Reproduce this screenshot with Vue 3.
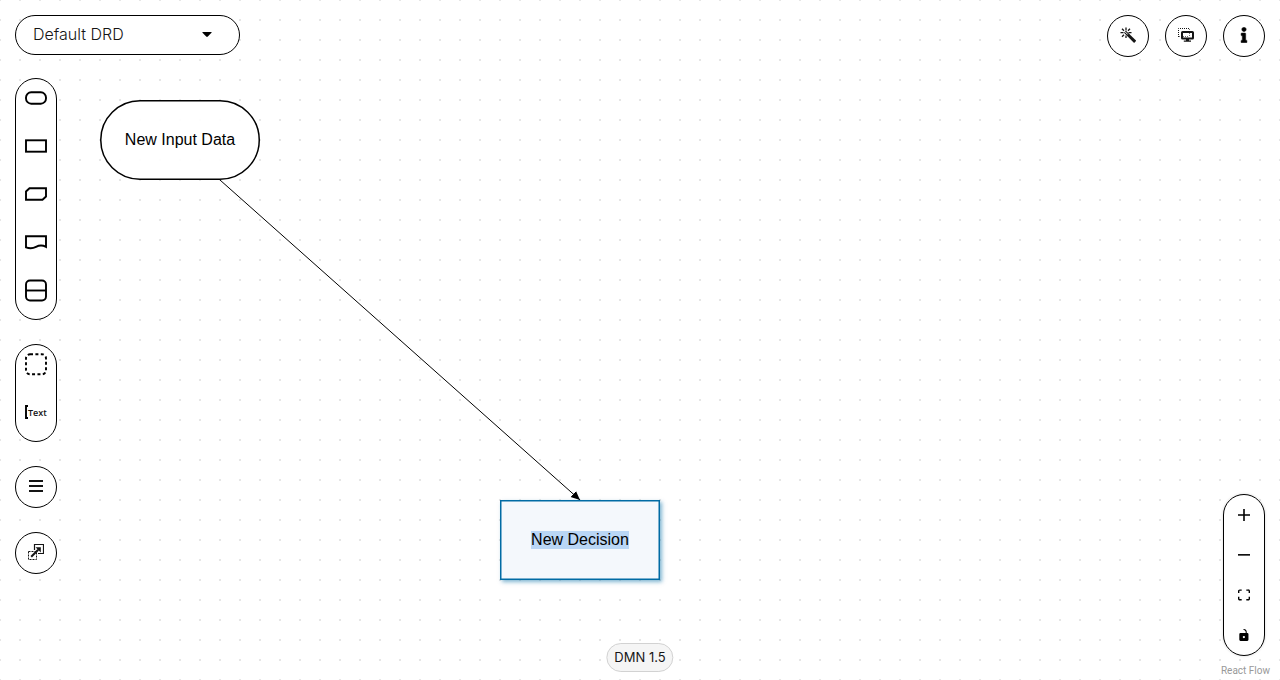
<script setup>
import { onMounted, ref } from 'vue'

const decisionName = ref('New Decision')
const nameInput = ref(null)

const nodeTools = [
  { label: 'Input Data', shape: 'input' },
  { label: 'Decision', shape: 'decision' },
  { label: 'Business Knowledge Model', shape: 'bkm' },
  { label: 'Knowledge Source', shape: 'source' },
  { label: 'Decision Service', shape: 'service' }
]

onMounted(() => {
  nameInput.value.focus()
  nameInput.value.select()
})
</script>

<template>
  <main class="editor">
    <svg class="canvas" aria-hidden="true">
      <defs>
        <pattern id="dots" x="-10" y="-10" width="20" height="20" patternUnits="userSpaceOnUse">
          <circle cx="10" cy="10" r="1" fill="#dedede" />
        </pattern>
        <marker id="arrow" viewBox="0 0 10 10" refX="10" refY="5" markerWidth="9" markerHeight="9" markerUnits="userSpaceOnUse" orient="auto">
          <path d="M0 .5L10 5L0 9.500z" />
        </marker>
      </defs>
      <rect width="100%" height="100%" fill="url(#dots)" />
      <path d="M220 180L580 500" stroke="#000" fill="none" marker-end="url(#arrow)" />
    </svg>

    <div class="node input-node">
      <svg class="node-shape" viewBox="0 0 160 80" aria-hidden="true"><rect x=".75" y=".75" width="158.500" height="78.500" rx="39.250" fill="#fff" fill-opacity=".9" stroke="#000" stroke-width="1.500" /></svg>
      <span class="node-name">New Input Data</span>
    </div>
    <div class="node decision-node">
      <svg class="node-shape" viewBox="0 0 160 80" aria-hidden="true"><rect x=".75" y=".75" width="158.500" height="78.500" fill="#f4f8fc" stroke="#006ba4" stroke-width="1.500" /></svg>
      <input ref="nameInput" v-model="decisionName" class="node-name" aria-label="Decision name" spellcheck="false" />
    </div>

    <header class="topbar">
      <button class="drd" type="button">
        <span>Default DRD</span>
        <svg width="10" height="5" viewBox="0 0 10 5"><path d="M1 0h8q1 0 .5 .8L5.8 4.600q-.8 .7-1.600 0L.5 .8Q0 0 1 0z" /></svg>
      </button>
      <div class="actions">
        <button class="round" type="button" aria-label="Autolayout">
          <svg width="16" height="16" viewBox="0 0 16 16" fill="none" stroke="#151515">
            <path d="M6 .5v3M6 8.500v2.500M.5 5.700h3M8.500 5.700h3M2 1.800l2 2M10 1.800l-2 2M2 9.700l2-2" stroke-width="1.300" />
            <path d="M5 4.700l3.500 3.500" stroke-width="2.800" />
            <path d="M5.300 5l2.500 2.500" stroke="#fff" stroke-width="1" />
            <path d="M8 7.700l7.200 7.200" stroke-width="3" />
          </svg>
        </button>
        <button class="round" type="button" aria-label="Overlays">
          <svg width="16" height="16" viewBox="0 0 16 16" fill="none" stroke="#151515">
            <path d="M.5 10V1.500h11" stroke-dasharray="1 1" />
            <rect x="4" y="5" width="11" height="6.500" rx=".6" stroke-width="2" />
            <path d="M1 9.500h10M11.500 2v7" stroke-width=".6" stroke-dasharray="1 1" />
            <path d="M8 12h3v1.500h2v1.200H5.800v-1.200H8z" fill="#151515" stroke="none" />
          </svg>
        </button>
        <button class="round" type="button" aria-label="Properties">
          <svg width="8" height="16" viewBox="-32 -6 256 524" stroke="#151515" stroke-width="16"><path d="M20 424.229h20V279.771H20c-11.046 0-20-8.954-20-20V212c0-11.046 8.954-20 20-20h112c11.046 0 20 8.954 20 20v212.229h20c11.046 0 20 8.954 20 20V492c0 11.046-8.954 20-20 20H20c-11.046 0-20-8.954-20-20v-47.771c0-11.046 8.954-20 20-20zM96 0C56.235 0 24 32.235 24 72s32.235 72 72 72 72-32.235 72-72S135.764 0 96 0z" /></svg>
        </button>
      </div>
    </header>

    <div class="workspace">
      <aside class="tools">
        <div class="group palette">
          <button v-for="tool in nodeTools" :key="tool.shape" class="tool" type="button" :aria-label="tool.label">
            <svg width="24" height="24" viewBox="0 0 24 24" fill="none" stroke="#000" stroke-width="1.900">
              <rect v-if="tool.shape === 'input'" x="2" y="6.300" width="20" height="11.400" rx="5.200" />
              <rect v-else-if="tool.shape === 'decision'" x="2" y="6.300" width="20" height="11.400" />
              <path v-else-if="tool.shape === 'bkm'" d="M5.500 6.300H22v8.200L18.500 17.700H2v-8.200z" />
              <path v-else-if="tool.shape === 'source'" d="M2 6.300h20v10.500c-3-1.600-7-1.600-10 0s-7 1.600-10 .5z" />
              <template v-else>
                <rect x="2" y="2.500" width="20" height="20" rx="4" />
                <path d="M2 12.500h20" />
              </template>
            </svg>
          </button>
        </div>
        <div class="group palette">
          <button class="tool" type="button" aria-label="Group">
            <svg width="24" height="24" viewBox="0 0 24 24" fill="none" stroke="#000" stroke-width="1.900"><rect x="2" y="2.300" width="20" height="20" rx="4" stroke-dasharray="3 2.400" /></svg>
          </button>
          <button class="tool" type="button" aria-label="Text annotation">
            <svg width="24" height="24" viewBox="0 0 24 24">
              <path d="M4 6H2v12h2" fill="none" stroke="#000" stroke-width="1.900" />
              <text x="4" y="15.500" class="tool-text">Text</text>
            </svg>
          </button>
        </div>
        <button class="round" type="button" aria-label="DRG nodes">
          <svg width="14" height="12" viewBox="0 0 14 12" fill="none" stroke="#151515" stroke-width="2"><path d="M0 1h14M0 6h14M0 11h14" /></svg>
        </button>
        <button class="round" type="button" aria-label="External nodes">
          <svg width="16" height="16" viewBox="0 0 16 16" fill="none" stroke="#151515">
            <path d="M6.500 6V.5h9v9H10" stroke-width="1.200" />
            <rect x=".5" y="7.500" width="8" height="8" stroke-dasharray="2 1" />
            <path d="M3.200 12.800l7-7" stroke-width="2" />
            <path d="M7.500 3.200h5.300v5.300z" fill="#151515" stroke="none" />
          </svg>
        </button>
      </aside>

      <div class="group controls">
        <button type="button" aria-label="Zoom in"><svg width="12" height="12" viewBox="0 0 32 32"><path d="M32 18.133H18.133V32h-4.266V18.133H0v-4.266h13.867V0h4.266v13.867H32z" /></svg></button>
        <button type="button" aria-label="Zoom out"><svg width="12" height="2" viewBox="0 0 32 5"><path d="M0 0h32v4.200H0z" /></svg></button>
        <button type="button" aria-label="Fit view"><svg width="12" height="12" viewBox="0 0 32 30"><path d="M3.692 4.630c0-.53.4-.938.939-.938h5.215V0H4.708C2.130 0 0 2.054 0 4.630v5.216h3.692V4.631zM27.354 0h-5.200v3.692h5.170c.53 0 .984.4.984.939v5.215H32V4.631A4.624 4.624 0 0027.354 0zm.954 24.830c0 .532-.4.940-.939.940h-5.215v3.768h5.215c2.577 0 4.631-2.130 4.631-4.707v-5.139h-3.692v5.139zm-23.677.940c-.531 0-.939-.4-.939-.94v-5.138H0v5.139c0 2.577 2.130 4.707 4.708 4.707h5.138V25.770H4.631z" /></svg></button>
        <button type="button" aria-label="Toggle interactivity"><svg width="12" height="12" viewBox="0 0 25 32"><path d="M21.333 10.667H19.810V7.619C19.810 3.429 16.380 0 12.190 0c-4.114 1.828-1.370 2.133.305 2.438 1.676.305 4.420 2.590 4.420 5.181v3.048H3.047A3.056 3.056 0 000 13.714v15.238A3.056 3.056 0 003.048 32h18.285a3.056 3.056 0 003.048-3.048V13.714a3.056 3.056 0 00-3.048-3.047zM12.190 24.533a3.056 3.056 0 01-3.047-3.047 3.056 3.056 0 013.047-3.048 3.056 3.056 0 013.048 3.048 3.056 3.056 0 01-3.048 3.047z" /></svg></button>
      </div>
    </div>

    <div class="version">DMN 1.5</div>
    <a class="attribution" href="#">React Flow</a>
  </main>
</template>

<style>
body {
  margin: 0;
}
</style>

<style scoped>
.editor {
  position: relative;
  box-sizing: border-box;
  min-height: 100vh;
  padding: 15px 15px 24px;
  display: flex;
  flex-direction: column;
  gap: 21px;
  background: #fff;
  color: #151515;
  font-family: Inter, "Open Sans", sans-serif;
  overflow: hidden;
}

.canvas {
  position: absolute;
  inset: 0;
  width: 100%;
  height: 100%;
}

button {
  box-sizing: border-box;
  padding: 0;
  border: 0;
  background: none;
  color: inherit;
  font: inherit;
  display: flex;
  align-items: center;
  justify-content: center;
  cursor: pointer;
}

button svg {
  display: block;
}

.node {
  position: absolute;
  width: 160px;
  height: 80px;
  display: flex;
  align-items: center;
  justify-content: center;
  color: #000;
  font: 16px/18px "Liberation Sans", Arial, sans-serif;
}

.node-shape {
  position: absolute;
  inset: 0;
}

.input-node {
  left: 100px;
  top: 100px;
}

.decision-node {
  left: 500px;
  top: 500px;
  box-shadow: 2px 2px 4px rgba(0, 107, 164, 0.5);
}

.node-name {
  position: relative;
}

input.node-name {
  width: 100%;
  padding: 0;
  border: 0;
  outline: 0;
  background: none;
  color: inherit;
  font: inherit;
  text-align: center;
}

.node-name::selection {
  background: #b9d6f5;
  color: #000;
}

.topbar,
.workspace {
  position: relative;
  display: flex;
  justify-content: space-between;
  pointer-events: none;
}

.topbar {
  align-items: flex-start;
}

.workspace {
  flex: 1;
}

.topbar button,
.workspace button {
  pointer-events: auto;
}

.drd {
  width: 225px;
  height: 40px;
  padding: 0 27px 2px 17px;
  border: 1px solid #000;
  border-radius: 20px;
  background: #fff;
  justify-content: space-between;
  font-size: 16px;
  font-weight: 300;
}

.actions {
  display: flex;
  gap: 16px;
}

.round {
  width: 42px;
  height: 42px;
  padding-bottom: 2px;
  border: 1px solid #000;
  border-radius: 50%;
  background: #fff;
}

.tools {
  display: flex;
  flex-direction: column;
  gap: 24px;
}

.group {
  box-sizing: border-box;
  width: 42px;
  border: 1px solid #000;
  border-radius: 21px;
  background: #fff;
}

.tool {
  width: 100%;
  height: 48px;
  padding-bottom: 10px;
}

.tool-text {
  font: 600 9px "Open Sans", sans-serif;
  fill: #151515;
}

.controls {
  align-self: flex-end;
  box-shadow: 0 0 2px 1px rgba(0, 0, 0, 0.08);
}

.controls button {
  width: 100%;
  height: 40px;
}

.version {
  position: absolute;
  bottom: 8px;
  left: 50%;
  transform: translateX(-50%);
  padding: 3px 7px;
  border: 1px solid #d2d2d2;
  border-radius: 15px;
  background: #f5f5f5;
  font-size: 13px;
  line-height: 21px;
  white-space: nowrap;
}

.attribution {
  position: absolute;
  right: 10px;
  bottom: 3px;
  color: #999;
  font: 10px/12px Roboto, sans-serif;
  text-decoration: none;
}
</style>
